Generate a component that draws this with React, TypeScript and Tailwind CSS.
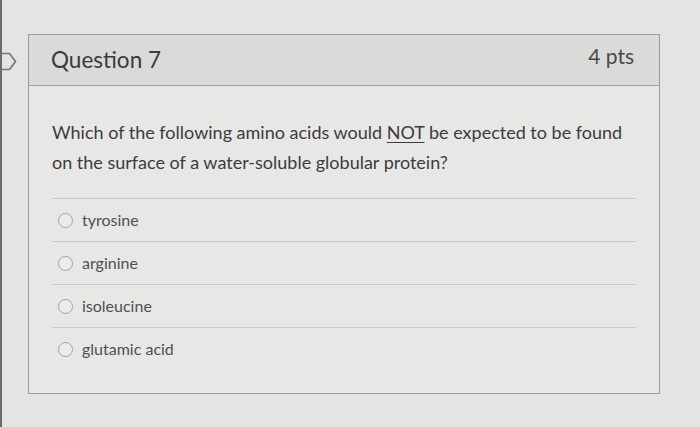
const ANSWERS = ["tyrosine", "arginine", "isoleucine", "glutamic acid"];

export default function App() {
  return (
    <div
      className="h-[427px] w-[700px] overflow-hidden bg-[#e4e4e2] border-l-2 border-[#6b6b6b] flex items-start gap-[11px] pt-[34px]"
      style={{ fontFamily: "Lato, 'Open Sans', sans-serif" }}
    >
      {/* step arrow at the left edge */}
      <svg width="17" height="19" viewBox="0 0 17 19" className="mt-[18px] shrink-0 -ml-[2px]">
        <path d="M0 1.5 H9.5 L15.5 9.5 L9.5 17.5 H0" fill="none" stroke="#777" strokeWidth="1.7" strokeLinejoin="round" />
      </svg>

      <div className="w-[632px] h-[360px] border border-[#9c9c9c] bg-[#e7e7e5] flex flex-col">
        {/* header */}
        <div className="h-[51px] shrink-0 bg-[#dadad8] border-b border-[#a3a3a3] flex items-center justify-between pl-[22px] pr-[25px]">
          <span className="text-[22.5px] text-[#3a3a3a]">Question 7</span>
          <span className="text-[21px] text-[#4a4a4a] -mt-[8px]">4 pts</span>
        </div>

        {/* body */}
        <div className="flex flex-col px-[23px] pt-[31px]">
          <p className="text-[18px] leading-[30px] text-[#3c3c3c] pr-[8px]">
            Which of the following amino acids would{" "}
            <span className="underline underline-offset-[3px]">NOT</span> be expected to be found on the
            surface of a water-soluble globular protein?
          </p>

          <div className="mt-[21px] flex flex-col">
            {ANSWERS.map((a) => (
              <label
                key={a}
                className="h-[43px] border-t border-[#c9c9c7] flex items-center gap-[9px] pl-[6px]"
              >
                <span className="w-[15px] h-[15px] rounded-full border border-[#a2a2a2] bg-[#ececea] shrink-0" />
                <span className="text-[16px] text-[#505050]">{a}</span>
              </label>
            ))}
          </div>
        </div>
      </div>
    </div>
  );
}
